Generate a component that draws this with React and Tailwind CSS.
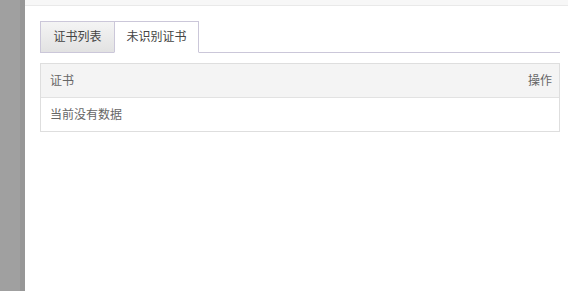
export default function App() {
  return (
    <div className="flex h-[291px] w-[568px] bg-white text-[12px] text-[#555]" style={{ fontFamily: '"Liberation Sans", "Noto Sans CJK SC", sans-serif' }}>
      <div className="flex h-full w-[25px] shrink-0">
        <div className="h-full w-[20px] bg-[#a0a0a0]" />
        <div className="h-full w-[5px] bg-[#979797]" />
      </div>
      <div className="flex min-w-0 flex-1 flex-col">
        <div className="h-[6px] border-b border-[#e9e9e9] bg-[#f7f7f7]" />
        <div className="pl-[15px] pr-[8px] pt-[15px]">
          <div className="flex border-b border-[#cbc7d9]">
            <div className="-mb-px flex h-[32px] w-[75px] items-center justify-center border border-[#cbc7d9] bg-gradient-to-b from-[#f4f4f4] to-[#e2e2e2] text-[#444]">
              证书列表
            </div>
            <div className="-mb-px -ml-px flex h-[32px] w-[85px] items-center justify-center border border-b-white border-[#cbc7d9] bg-white text-[#444]">
              未识别证书
            </div>
          </div>
          <div className="mt-[10px] border border-[#dedede]">
            <div className="flex h-[34px] items-center justify-between border-b border-[#e2e2e2] bg-[#f4f4f4] pl-[9px] pr-[7px] text-[#666]">
              <span>证书</span>
              <span>操作</span>
            </div>
            <div className="flex h-[33px] items-center px-[9px] text-[#666]">当前没有数据</div>
          </div>
        </div>
      </div>
    </div>
  );
}
